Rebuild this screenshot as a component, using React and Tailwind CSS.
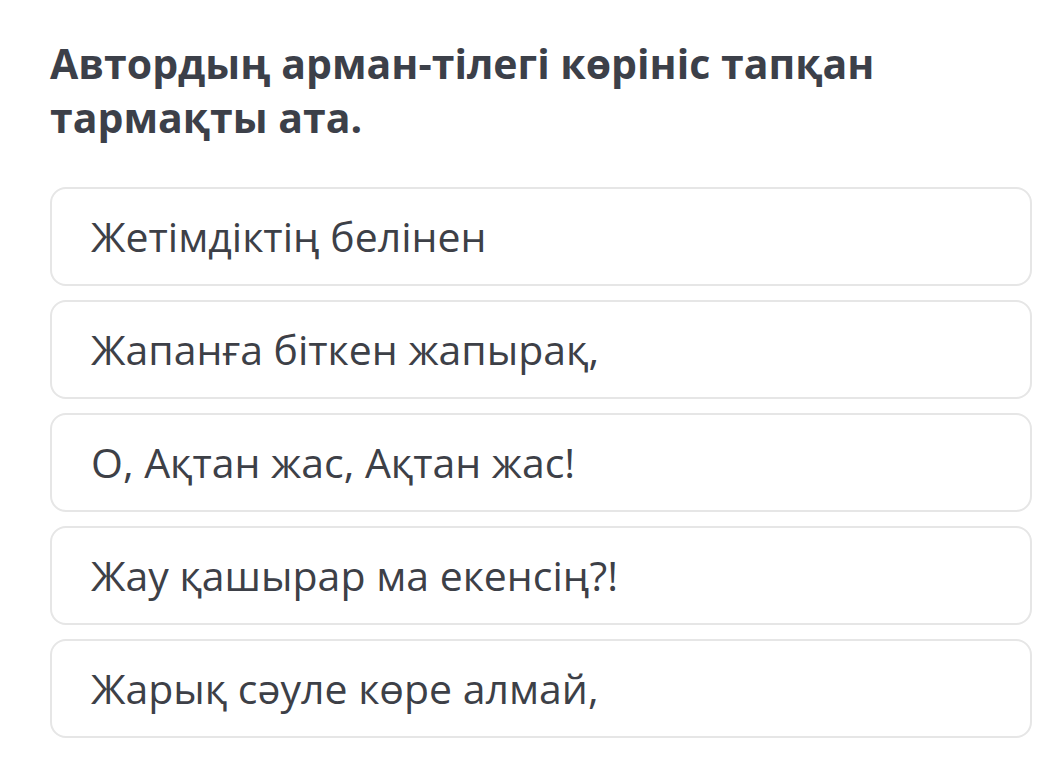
import React from 'react';

const options = [
  'Жетімдіктің белінен',
  'Жапанға біткен жапырақ,',
  'О, Ақтан жас, Ақтан жас!',
  'Жау қашырар ма екенсің?!',
  'Жарық сәуле көре алмай,',
];

const App = () => {
  return (
    <div
      className="min-h-[777px] bg-white pl-[50px] pr-[27px] pt-[36px]"
      style={{ fontFamily: '"Open Sans", "Noto Sans", sans-serif' }}
    >
      <h1 className="text-[41px] leading-[54px] font-bold text-[#3c4049]">
        Автордың арман-тілегі көрініс тапқан тармақты ата.
      </h1>

      <div className="mt-[43px] flex flex-col gap-[14px]">
        {options.map((text) => (
          <div
            key={text}
            className="flex h-[99px] items-center rounded-[16px] border-2 border-[#e6e6e6] bg-white pl-[39px] text-[41px] text-[#3d4047]"
          >
            {text}
          </div>
        ))}
      </div>
    </div>
  );
};

export default App;
